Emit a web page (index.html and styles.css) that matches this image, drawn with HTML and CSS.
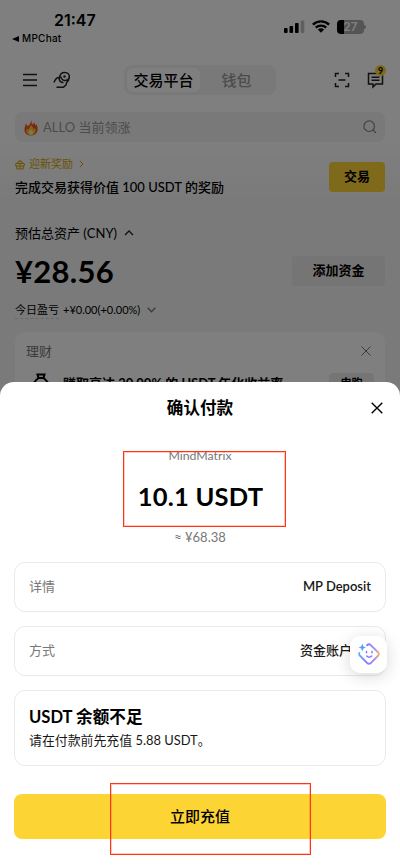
FILE: index.html
```html
<!DOCTYPE html>
<html lang="zh-CN">
<head>
<meta charset="utf-8">
<meta name="viewport" content="width=device-width, initial-scale=1">
<title>确认付款</title>
<link rel="stylesheet" href="styles.css">
</head>
<body>
<div class="phone">
  <main class="wallet">
    <div class="status">
      <div class="status-left">
        <div class="clock">21:47</div>
        <div class="back"><svg width="7" height="6" viewBox="0 0 7 6"><path d="M0 3 7 0v6z"/></svg><span>MPChat</span></div>
      </div>
      <div class="status-right">
        <svg width="21" height="14" viewBox="0 0 21 14"><rect y="8" width="3.6" height="5" rx="1"/><rect x="5.5" y="6" width="3.6" height="7" rx="1"/><rect x="11" y="3" width="3.6" height="10" rx="1"/><rect x="16.7" y="0.5" width="3.6" height="12.5" rx="1" opacity=".25"/></svg>
        <svg class="wifi" width="18" height="13" viewBox="0 0 18 13"><g fill="none" stroke="#000" stroke-width="2.4"><path d="M.9 4.7C5.4.2 12.600.2 17.100 4.700M3.800 7.700C6.700 4.900 11.300 4.900 14.200 7.700"/></g><path d="M5.900 9.400C7.700 7.900 10.300 7.900 12.100 9.400L9 12.800z"/></svg>
        <div class="battery"><span>27</span></div>
      </div>
    </div>

    <header class="nav">
      <svg width="14" height="14" viewBox="0 0 14 14" class="line"><path d="M0 1.500h14M0 7h14M0 12.500h14"/></svg>
      <svg class="line rocket" width="18" height="18" viewBox="0 0 18 18"><path d="M1 11.500C2 8.500 3.500 6 6.500 6.500M6.500 6.500C7 3 9 1.300 12 1.500C15 1.500 16.700 3.500 16.300 6.500C15.500 9 13.500 9.800 11 9.500M6.500 6.500C5.500 9.500 8 12 10.500 11.500M16.300 6.500C16 9.500 15 10.500 13.500 11.800C14 14 12 15 10.500 16.200H3.500M7.500 5.500C8.500 8 9.500 9 11 9.500"/><circle cx="11.500" cy="5.500" r="1.200" fill="#202020" stroke="none"/></svg>
      <div class="tabs"><span class="tab on">交易平台</span><span class="tab">钱包</span></div>
      <svg class="line scan" width="16" height="16" viewBox="0 0 16 16"><path d="M1.500 5V1.500H5M11 1.500h3.500V5M14.500 11v3.500H11M5 14.500H1.500V11M4.500 8h7"/></svg>
      <div class="messages">
        <svg class="line" width="18" height="17" viewBox="0 0 18 17"><path d="M1.500 1.500h14v10.500H9L6 15v-3H1.500zM4.500 5.200h8M4.500 8.300h8"/></svg>
        <span class="count">9</span>
      </div>
    </header>

    <div class="search">
      <svg width="14" height="17" viewBox="0 0 14 17"><path fill="#f4511e" d="M7 .5C8 3 6.800 4 9 5.500Q10 4.500 9.500 3Q11.500 5 11.800 7L12.500 5Q14.500 10 13 13Q11 16.500 7 16.500Q2 16.500.7 12.500C0 9 1.300 7 2 4.500Q3.200 6 3.300 7.500C5 6 7.500 4 7 .5z"/><path fill="#ffc62e" d="M7.200 6C9.500 8.500 9.500 10 9.700 10.500L11 9Q12.500 12 10.500 14.500Q7 17.500 3.400 14.500Q1.500 12 3 9.500L4.700 11Q5 8.500 7.200 6z"/><path fill="#fff18a" d="M7 10Q9.500 12.500 8.800 15Q7 16.800 5 15Q4.300 12.500 7 10z"/></svg>
      <span>ALLO 当前领涨</span>
      <svg class="glass" width="14" height="14" viewBox="0 0 14 14"><circle cx="6.200" cy="6.200" r="5.300"/><path d="m10 10 3 3"/></svg>
    </div>

    <section class="promo">
      <div>
        <div class="promo-tag">
          <svg width="10" height="11" viewBox="0 0 10 11"><path d="M2 4.500Q2 2.500 5 2.500T8 4.500M.7 4.500h8.600V7H.7zM1.700 7v3h6.600V7M5 5v5M3.500 1.200 5 2.500l1.500-1.300"/></svg>
          <span>迎新奖励</span>
          <svg class="more" width="5" height="8" viewBox="0 0 5 8"><path d="m1 1 3 3-3 3"/></svg>
        </div>
        <div class="promo-text">完成交易获得价值 100 USDT 的奖励</div>
      </div>
      <span class="trade">交易</span>
    </section>

    <section class="assets">
      <div class="assets-label"><span>预估总资产 (CNY)</span><svg width="10" height="6" viewBox="0 0 10 6"><path d="m1 5 4-4 4 4"/></svg></div>
      <div class="balance"><strong>¥28.56</strong><span class="add">添加资金</span></div>
      <div class="profit"><span class="today">今日盈亏</span><span class="delta">+¥0.00(+0.00%)</span><svg width="9" height="6" viewBox="0 0 9 6"><path d="m.7.7 3.800 4 3.800-4"/></svg></div>
    </section>

    <section class="earn">
      <div class="earn-head"><span>理财</span><svg width="10" height="10" viewBox="0 0 10 10"><path d="m.5.500 9 9m0-9-9 9"/></svg></div>
      <div class="earn-row">
        <svg width="18" height="20" viewBox="0 0 18 20"><path d="M5.500 1.500h7L11.500 5h-5zM6.500 5Q1 9 1 14T9 19T17 14T11.500 5"/></svg>
        <span class="earn-text">赚取高达 20.00% 的 USDT 年化收益率</span>
        <span class="subscribe">申购</span>
      </div>
    </section>
  </main>

  <div class="scrim"></div>

  <section class="sheet">
    <header class="sheet-head"><h1>确认付款</h1><svg width="12" height="12" viewBox="0 0 12 12"><path d="m.7.700 10.600 10.600m0-10.600L.7 11.300"/></svg></header>
    <div class="amount">
      <div class="merchant">MindMatrix</div>
      <div class="sum">10.1 USDT</div>
      <div class="approx">≈ ¥68.38</div>
    </div>
    <div class="field"><span>详情</span><b>MP Deposit</b></div>
    <div class="field method"><span>方式</span><b>资金账户</b></div>
    <div class="notice"><h2>USDT 余额不足</h2><p>请在付款前先充值 5.88 USDT。</p></div>
    <div class="topup">立即充值</div>
  </section>

  <div class="assistant">
    <svg width="22" height="22" viewBox="0 0 22 22" fill="none" stroke-linecap="round" stroke-linejoin="round">
      <defs><linearGradient id="edge" x1="0" y1="0" x2="22" y2="0" gradientUnits="userSpaceOnUse"><stop offset="0" stop-color="#58b5ff"/><stop offset=".4" stop-color="#8179ff"/><stop offset=".75" stop-color="#a18bff"/><stop offset="1" stop-color="#ffb84c"/></linearGradient></defs>
      <path stroke="url(#edge)" stroke-width="1.800" d="M9 2.300Q11 .2 13 2.300L20.300 9.500Q21.500 11 20.300 12.500L13 19.800Q11 21.800 9 19.800L1.800 12.500Q.8 11.500 1.300 10"/>
      <path fill="#559cff" d="M4.300.8 5.400 3.400 8 4.500 5.400 5.600 4.300 8.200 3.200 5.600.6 4.500 3.200 3.400z"/>
      <path stroke="#8377ff" stroke-width="1.500" d="M8.500 8.500v1.300M14 8.500v1.300M8.800 13Q11.200 15.500 13.700 13"/>
    </svg>
  </div>
  <div class="mark mark-amount"></div>
  <div class="mark mark-topup"></div>
</div>
</body>
</html>
```
FILE: styles.css
```css
* { box-sizing: border-box; }
body { margin: 0; font-family: Lato, "Noto Sans CJK SC", sans-serif; color: #000; }
h1, h2, p { margin: 0; }
svg { display: block; flex: none; }
.phone { position: relative; width: 400px; height: 867px; overflow: hidden; background: #fff; }
.wallet { height: 867px; padding: 0 15px; background: linear-gradient(#fff 0, #fff 135px, #f4f4f4 205px, #f4f4f4); white-space: nowrap; }

.status { display: flex; justify-content: space-between; height: 58px; margin: 0 -3px; font-family: Inter, sans-serif; }
.clock { margin: 10px 0 0 42px; font-size: 16px; line-height: 20px; font-weight: 600; }
.back { display: flex; align-items: center; gap: 3px; margin-top: 2px; font-size: 10px; line-height: 13px; letter-spacing: .25px; font-weight: 500; }
.status-right { display: flex; margin: 20px 21px 0 0; }
.status-right > svg:first-child { margin-right: 3px; }
.wifi { margin-left: 4px; }
.battery { position: relative; width: 27px; height: 14px; margin-left: 7px; border-radius: 4px; background: linear-gradient(90deg, #000 27%, #aaa 27%); color: #fff; text-align: center; font-size: 11.5px; line-height: 14px; font-weight: 600; }
.status-right { margin-right: 24px; }
.battery::after { content: ""; position: absolute; right: -2px; top: 5px; width: 2px; height: 4px; border-radius: 0 2px 2px 0; background: #aaa; }

.nav { display: flex; align-items: center; height: 44px; padding-left: 8px; }
.line { fill: none; stroke: #202020; stroke-width: 1.5; }
.rocket { margin-left: 16px; }
.tabs { display: flex; width: 152px; height: 30px; margin-left: 53px; padding: 3px; border-radius: 8px; background: #f3f3f3; }
.tab { flex: 1; font-size: 15px; line-height: 24px; font-weight: 500; text-align: center; color: #999; border-radius: 6px; }
.on { color: #000; background: #fff; }
.scan { margin-left: 58px; }
.messages { position: relative; margin-left: 17px; }
.count { position: absolute; left: 8px; top: -7px; width: 11px; height: 11px; border-radius: 6px; background: #fcd535; font-size: 9px; line-height: 11px; font-weight: 700; text-align: center; }

.search { display: flex; align-items: center; height: 30px; margin-top: 10px; padding: 0 8px 0 9px; border-radius: 8px; background: #f2f2f2; color: #999; font-size: 13px; }
.search span { margin: -2px 0 0 5px; }
.glass { margin-left: auto; fill: none; stroke: #888; stroke-width: 1.2; }

.promo { display: flex; justify-content: space-between; height: 61px; padding-top: 13px; }
.promo-tag { display: flex; align-items: center; height: 18px; color: #d6a500; font-size: 11px; line-height: 18px; }
.promo-tag svg { fill: none; stroke: #d6a500; stroke-width: 1; }
.promo-tag span { margin-left: 4px; }
.promo-tag .more { margin-left: 6px; }
.promo-text { margin-top: 4px; font-size: 13px; line-height: 20px; font-weight: 500; }
.trade { width: 56px; height: 30px; margin-top: 7px; border-radius: 4px; background: #fcd535; font-size: 13px; line-height: 29px; font-weight: 700; text-align: center; }

.assets { height: 129px; padding-top: 20px; }
.assets svg { fill: none; stroke: #222; stroke-width: 1.3; }
.assets-label { display: flex; align-items: center; gap: 7px; height: 20px; font-size: 13px; line-height: 20px; }
.balance { display: flex; align-items: center; justify-content: space-between; height: 56px; }
.balance strong { font-size: 31px; line-height: 40px; font-weight: 700; letter-spacing: .3px; }
.add { width: 93px; height: 30px; border-radius: 4px; background: #eaeaea; font-size: 13px; line-height: 29px; font-weight: 700; text-align: center; }
.profit { display: flex; align-items: center; height: 22px; font-size: 11px; line-height: 20px; }
.profit .today { border-bottom: 1px dashed #d3d3d3; line-height: 17px; }
.delta { margin-left: 4px; }
.profit svg { margin-left: 7px; stroke: #777; }

.earn { height: 90px; padding: 10px 11px; border-radius: 11px; background: #fff; }
.earn-head { display: flex; align-items: center; justify-content: space-between; height: 18px; padding-right: 3px; color: #777; font-size: 13px; line-height: 18px; }
.earn-head svg { fill: none; stroke: #777; }
.earn-row { display: flex; align-items: flex-start; margin-top: 13px; padding-left: 6px; }
.earn-row svg { fill: none; stroke: #000; stroke-width: 2; }
.earn-text { margin-left: 13px; font-size: 13px; line-height: 20px; font-weight: 700; }
.subscribe { width: 45px; height: 24px; margin-left: auto; border-radius: 4px; background: #eaeaea; font-size: 11px; line-height: 20px; font-weight: 700; text-align: center; }

.scrim { position: absolute; inset: 0; background: rgba(0, 0, 0, .5); }

.sheet { position: absolute; left: 0; right: 0; top: 382px; bottom: 0; padding: 0 14px; border-radius: 14px 14px 0 0; background: #fff; }
.sheet-head { display: grid; grid-template-columns: 1fr auto 1fr; align-items: center; height: 52px; padding-right: 3px; }
.sheet-head h1 { grid-column: 2; padding-left: 3px; font-size: 16.600px; line-height: 24px; font-weight: 700; }
.sheet-head svg { justify-self: end; fill: none; stroke: #000; stroke-width: 1.400; }
.amount { height: 128px; padding-top: 13px; text-align: center; color: #777; }
.merchant { font-size: 12.300px; line-height: 17px; }
.sum { margin-top: 11px; padding-left: 1px; color: #000; font-size: 25.500px; line-height: 42px; font-weight: 700; letter-spacing: .2px; }
.approx { margin-top: 11px; font-size: 13px; line-height: 18px; }
.field { display: flex; align-items: center; justify-content: space-between; height: 50px; margin-bottom: 14px; padding: 0 14px 3px; border: 1px solid #eaeaea; border-radius: 11px; font-size: 13px; color: #777; }
.field b { color: #181818; font-weight: 600; }
.method b { margin-right: 19px; font-weight: 500; }
.notice { height: 76px; padding: 14px; border: 1px solid #eaeaea; border-radius: 11px; }
.notice h2 { font-size: 16.600px; line-height: 24px; font-weight: 700; }
.notice p { font-size: 12.900px; line-height: 23px; color: #181818; }
.topup { height: 45px; margin-top: 28px; border-radius: 8px; background: #fcd535; font-size: 15px; line-height: 44px; font-weight: 500; text-align: center; }

.assistant { position: absolute; left: 350px; top: 636px; width: 37px; height: 37px; padding: 7px 8px; border-radius: 10px; background: #fff; box-shadow: 0 3px 16px rgba(0, 0, 0, .16); }
.mark { position: absolute; border: 1px solid #ff3515; box-shadow: inset 0 0 0 1px rgba(255, 74, 43, .3); }
.mark-amount { left: 123px; top: 451px; width: 163px; height: 76px; }
.mark-topup { left: 110px; top: 783px; width: 201px; height: 72px; }
```
